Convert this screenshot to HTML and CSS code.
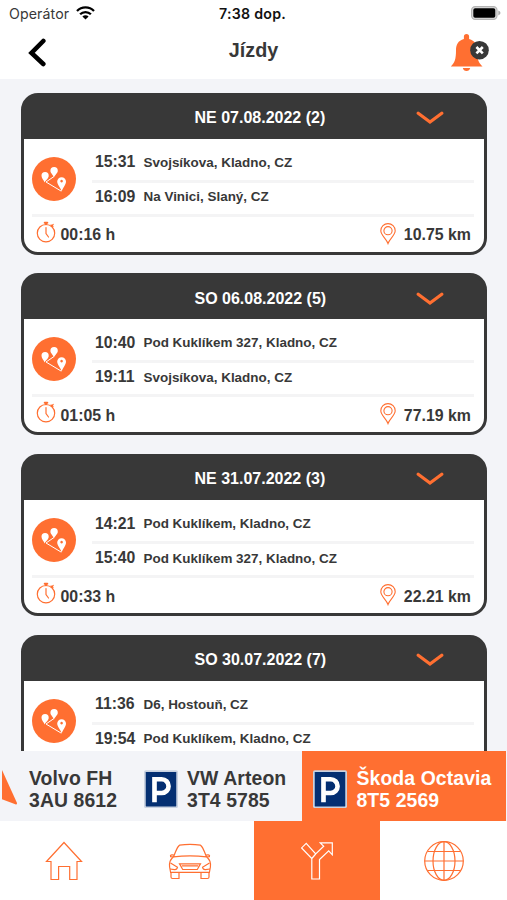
FILE: index.html
```html
<!DOCTYPE html>
<html lang="cs">
<head>
<meta charset="utf-8">
<meta name="viewport" content="width=device-width, initial-scale=1">
<title>Jízdy</title>
<link rel="stylesheet" href="styles.css">
</head>
<body>
<svg class="defs" aria-hidden="true">
  <symbol id="route" viewBox="0 0 44 44">
    <circle cx="22" cy="22" r="22" fill="#ff6f31"/>
    <path d="M14 25 L22 19.5 M14 25 L29 34" fill="none" stroke="#fff" stroke-width="1"/>
    <path d="M12.7 25.5 C11.8 22.8 9.5 21.4 9.5 18.7 a3.6 3.6 0 0 1 7.2 0 C16.7 21.4 13.8 22.8 12.7 25.5z M22 20.6 C21.3 17.8 18.4 16.5 18.4 13.8 a3.7 3.7 0 0 1 7.4 0 C25.8 16.5 22.8 17.8 22 20.6z" fill="#fff"/>
    <path fill-rule="evenodd" d="M29.7 35 C29 30.5 25.2 28.4 25.2 24.6 a4.4 4.4 0 0 1 8.8 0 C34 28.4 30.5 30.5 29.7 35z M29.6 22.8 a1.3 1.3 0 1 0 .01 0z" fill="#fff"/>
  </symbol>
  <symbol id="chevron" viewBox="0 0 28 14">
    <path d="M2.2 2.2 L14 11 L25.8 2.2" fill="none" stroke="#ff6f31" stroke-width="3.2" stroke-linecap="round" stroke-linejoin="miter"/>
  </symbol>
  <symbol id="watch" viewBox="0 0 20 22">
    <g fill="none" stroke="#ff6f31" stroke-width="1.2" stroke-linecap="round">
      <circle cx="10" cy="12.2" r="8.7"/>
      <path d="M10 6.5 V12.5 L12.5 16 M15 4 L17 5.5 M17.2 3.4 L15.7 5.1"/>
      <path d="M8.7 1.7 H11.3 M10 1.8 V3.3" stroke-width="2"/>
    </g>
  </symbol>
  <symbol id="pin" viewBox="0 0 16 22">
    <g fill="none" stroke="#ff6f31" stroke-width="1.1">
      <path d="M8 20.5 C6.3 15.5 .8 12.2 .8 7.8 a7.2 7.2 0 0 1 14.4 0 C15.2 12.2 9.7 15.5 8 20.5z"/>
      <circle cx="8" cy="7.7" r="4.1"/>
    </g>
  </symbol>
  <symbol id="parking" viewBox="0 0 35 39">
    <rect width="35" height="39" rx="2" class="rim"/>
    <rect x="1.8" y="1.8" width="31.4" height="35.4" rx=".5" fill="#042f72"/>
    <path d="M10.8 33 V9.2 H18.2 a6 6 0 0 1 0 14.2 H10.8" fill="none" stroke="#fff" stroke-width="4.8"/>
  </symbol>
</svg>

<div class="screen">
  <div class="status">
    <span class="carrier">Operátor</span>
    <svg class="wifi" width="19" height="14" viewBox="0 0 19 14">
      <g fill="none" stroke="#000" stroke-width="2.3">
        <path d="M1 5 A12 12 0 0 1 18 5"/>
        <path d="M4.1 8.3 A7.6 7.6 0 0 1 14.9 8.3"/>
      </g>
      <path d="M9.5 13.6 L6.4 10.5 A4.4 4.4 0 0 1 12.6 10.5z"/>
    </svg>
    <span class="clock">7:38 dop.</span>
    <svg class="battery" width="30" height="14" viewBox="0 0 30 14">
      <rect x=".6" y=".6" width="25.4" height="12.8" rx="3.6" fill="#ddd" stroke="#b4b4b4" stroke-width="1.2"/>
      <rect x="2.3" y="2.2" width="22" height="9.6" rx="1.8"/>
      <path d="M27.3 4.6 Q29.5 5.6 29.5 7 Q29.5 8.4 27.3 9.4z" fill="#aaa"/>
    </svg>
  </div>

  <header class="topbar">
    <svg class="back" width="18" height="30" viewBox="0 0 18 30">
      <path d="M15.3 3 L3.5 15 L15.3 26" fill="none" stroke="#000" stroke-width="4.6" stroke-linecap="round"/>
    </svg>
    <h1>Jízdy</h1>
    <svg class="bell" width="40" height="40" viewBox="0 0 40 40">
      <path d="M16.5 1 a2.6 2.6 0 0 1 2.6 2.6 V6 C25 7.5 27 12 27 17 C27 26 28.5 29.5 32.5 33.6 H.8 C4.8 29.5 6 26 6 17 C6 12 8 7.5 13.9 6 V3.6 A2.6 2.6 0 0 1 16.5 1z M12.8 35 H20.2 a3.8 3.8 0 0 1 -7.4 0z" fill="#ff6f31"/>
      <circle cx="29.5" cy="17.2" r="9.3" fill="#383838"/>
      <path d="M26.4 14 L32.8 20.4 M32.8 14 L26.4 20.4" stroke="#fff" stroke-width="2.6"/>
    </svg>
  </header>

  <main class="trips">
    <article class="trip">
      <div class="trip-head"><span>NE 07.08.2022 (2)</span><svg class="chev"><use href="#chevron"/></svg></div>
      <div class="trip-body">
        <svg class="route"><use href="#route"/></svg>
        <div class="stops">
          <div class="stop"><b>15:31</b><span>Svojsíkova, Kladno, CZ</span></div>
          <div class="stop"><b>16:09</b><span>Na Vinici, Slaný, CZ</span></div>
        </div>
      </div>
      <div class="trip-foot"><svg class="watch"><use href="#watch"/></svg><span>00:16 h</span><svg class="pin"><use href="#pin"/></svg><span>10.75 km</span></div>
    </article>
    <article class="trip">
      <div class="trip-head"><span>SO 06.08.2022 (5)</span><svg class="chev"><use href="#chevron"/></svg></div>
      <div class="trip-body">
        <svg class="route"><use href="#route"/></svg>
        <div class="stops">
          <div class="stop"><b>10:40</b><span>Pod Kuklíkem 327, Kladno, CZ</span></div>
          <div class="stop"><b>19:11</b><span>Svojsíkova, Kladno, CZ</span></div>
        </div>
      </div>
      <div class="trip-foot"><svg class="watch"><use href="#watch"/></svg><span>01:05 h</span><svg class="pin"><use href="#pin"/></svg><span>77.19 km</span></div>
    </article>
    <article class="trip">
      <div class="trip-head"><span>NE 31.07.2022 (3)</span><svg class="chev"><use href="#chevron"/></svg></div>
      <div class="trip-body">
        <svg class="route"><use href="#route"/></svg>
        <div class="stops">
          <div class="stop"><b>14:21</b><span>Pod Kuklíkem, Kladno, CZ</span></div>
          <div class="stop"><b>15:40</b><span>Pod Kuklíkem 327, Kladno, CZ</span></div>
        </div>
      </div>
      <div class="trip-foot"><svg class="watch"><use href="#watch"/></svg><span>00:33 h</span><svg class="pin"><use href="#pin"/></svg><span>22.21 km</span></div>
    </article>
    <article class="trip">
      <div class="trip-head"><span>SO 30.07.2022 (7)</span><svg class="chev"><use href="#chevron"/></svg></div>
      <div class="trip-body">
        <svg class="route"><use href="#route"/></svg>
        <div class="stops">
          <div class="stop"><b>11:36</b><span>D6, Hostouň, CZ</span></div>
          <div class="stop"><b>19:54</b><span>Pod Kuklíkem, Kladno, CZ</span></div>
        </div>
      </div>
    </article>
  </main>

  <section class="cars">
    <div class="car volvo">
      <svg class="arrow" width="16" height="36" viewBox="0 0 16 36"><path d="M0 0 L15 33 Q15.3 35 13.3 34.3 L0 29.3z" fill="#ff6f31"/></svg>
      <p>Volvo FH<br>3AU 8612</p>
    </div>
    <div class="car arteon">
      <svg class="parking"><use href="#parking"/></svg>
      <p>VW Arteon<br>3T4 5785</p>
    </div>
    <div class="car active">
      <svg class="parking"><use href="#parking"/></svg>
      <p>Škoda Octavia<br>8T5 2569</p>
    </div>
  </section>

  <nav class="tabs">
    <a class="tab home"><svg width="38" height="40" viewBox="0 0 38 40"><path d="M19 1.5 L36.5 20.5 H32 V38.5 H24.7 V25.5 H13.6 V38.5 H6 V20.5 H1.5z"/></svg></a>
    <a class="tab"><svg width="44" height="40" viewBox="0 0 44 40">
      <path d="M5.5 15.8 C8 10.5 8.4 6.5 11.5 4.2 Q22 2.6 32.5 4.2 C35.6 6.5 36 10.5 38.5 15.8 M5.5 15.8 Q22 13.8 38.5 15.8 M5.5 15.8 C2 19 1.2 21 1.6 26 L2.6 31.3 H41.4 L42.4 26 C42.8 21 42 19 38.5 15.8 M5.5 15.8 L2.6 15.6 Q2 14 4 13.8 L6.3 14 M38.5 15.8 L41.4 15.6 Q42 14 40 13.8 L37.7 14"/>
      <path d="M3 31.5 V36 Q3 37.5 4.5 37.5 H11 V31.5 M41 31.5 V36 Q41 37.5 39.5 37.5 H33 V31.5 M11.5 22.8 H32.5 L29.3 28.5 H14.7z M13.8 24.8 H30.2 M2.5 22 L9.5 26.2 Q9 28.8 6.5 28.6 L2 28 M41.5 22 L34.5 26.2 Q35 28.8 37.5 28.6 L42 28"/>
    </svg></a>
    <a class="tab on"><svg width="34" height="40" viewBox="0 0 34 40"><path d="M6.2 2.3 L1.6 6.9 L11.8 17.5 V38 H19.5 V18.5 L28.7 9.8 L32.3 13.8 V1.8 H20.2 L23.7 5.3 L15.7 13z M11.8 17.5 L15.7 13"/></svg></a>
    <a class="tab"><svg width="42" height="42" viewBox="0 0 42 42"><circle cx="21" cy="21" r="19.3"/><ellipse cx="21" cy="21" rx="11" ry="19.3"/><path d="M21 1.7 V40.3 M1.7 21 H40.3 M4.5 11.5 H37.5 M4.5 30.5 H37.5"/></svg></a>
  </nav>
</div>
</body>
</html>
```
FILE: styles.css
```css
* { box-sizing: border-box; }

body {
  margin: 0;
  font-family: "Liberation Sans", Arial, sans-serif;
  color: #383838;
  background: #fff;
}

svg { display: block; flex: none; }
.defs { display: none; }

.screen {
  display: flex;
  flex-direction: column;
  width: 507px;
  height: 900px;
  overflow: hidden;
}

.status {
  display: flex;
  align-items: center;
  height: 27px;
  padding: 0 6px 0 9px;
  font-family: Inter, sans-serif;
  font-size: 14.2px;
  white-space: nowrap;
}
.carrier { width: 61px; letter-spacing: 0.1px; }
.wifi { margin: 0 0 2px 6px; }
.clock { margin-left: 124px; color: #111; font-weight: 600; letter-spacing: 0.25px; }
.battery { margin: 0 0 1px auto; }

.topbar {
  display: grid;
  grid-template-columns: 1fr auto 1fr;
  align-items: center;
  height: 52px;
  padding: 0 17px 0 28px;
}
.topbar h1 { margin: -6px 0 0 -11px; font-size: 19.8px; line-height: 24px; }
.bell { justify-self: end; }

.trips {
  display: flex;
  flex-direction: column;
  gap: 18.7px;
  height: 672px;
  padding: 13.7px 20px 0 21px;
  background: #f3f4f8;
  overflow: hidden;
}
.trip {
  flex: none;
  height: 162px;
  border: 3px solid #383838;
  border-radius: 17px;
  background: linear-gradient(#383838 43px, #fff 43px);
  overflow: hidden;
}
.trip-head {
  display: flex;
  align-items: center;
  height: 43px;
  padding: 1.5px 0 0 170.5px;
  color: #fff;
  font-size: 16px;
  font-weight: bold;
  white-space: nowrap;
}
.trip-head span { width: 221px; }
.chev { width: 28px; height: 14px; }

.trip-body {
  display: flex;
  align-items: flex-start;
  height: 78px;
  margin: 0 10px 0 8px;
  border-bottom: 3px solid #f4f4f5;
}
.route { width: 44px; height: 44px; margin: 18px 16px 0 0; }
.stops { flex: 1; padding-top: 6px; }
.stop {
  display: flex;
  align-items: center;
  height: 28px;
  padding-left: 3px;
  font-size: 13.45px;
  font-weight: bold;
  white-space: nowrap;
}
.stop:first-child { border-bottom: 3px solid #f4f4f5; height: 38px; }
.stop b { width: 48.5px; font-size: 15.8px; }

.trip-foot {
  display: flex;
  align-items: center;
  height: 35px;
  padding: 2px 13px 0 12px;
  font-size: 15.9px;
  font-weight: bold;
}
.watch { width: 20px; height: 22px; margin: -7px 4.5px 0 0; }
.pin { width: 16px; height: 22px; margin: -3px 8px 0 auto; }

.cars { display: flex; height: 69.5px; background: #f3f4f8; }
.car { display: flex; align-items: center; padding-top: 6px; }
.car p {
  margin: 0;
  padding-top: 1px;
  font-size: 19.4px;
  font-weight: bold;
  line-height: 22.3px;
  letter-spacing: 0.1px;
  white-space: nowrap;
}
.volvo { width: 143.5px; padding-left: 2px; }
.volvo p { margin-left: 11px; }
.arrow { margin-top: -1px; }
.arteon { width: 158.2px; }
.parking { width: 34px; height: 38.5px; margin-right: 9.5px; }
.rim { fill: #c9d2e1; }
.active { width: 204px; padding-left: 11.8px; background: #ff6f31; color: #fff; }
.active .parking { margin-right: 9px; }
.active .rim { fill: #fff; }

.tabs { display: grid; grid-template-columns: repeat(4, 1fr); height: 79.5px; }
.tab { display: flex; align-items: center; justify-content: center; padding-top: 1px; }
.tab svg { fill: none; stroke: #ff6f31; stroke-width: 1.2; }
.home { padding-left: 2px; }
.on { background: #ff6f31; }
.on svg { stroke: #fff; }
```
